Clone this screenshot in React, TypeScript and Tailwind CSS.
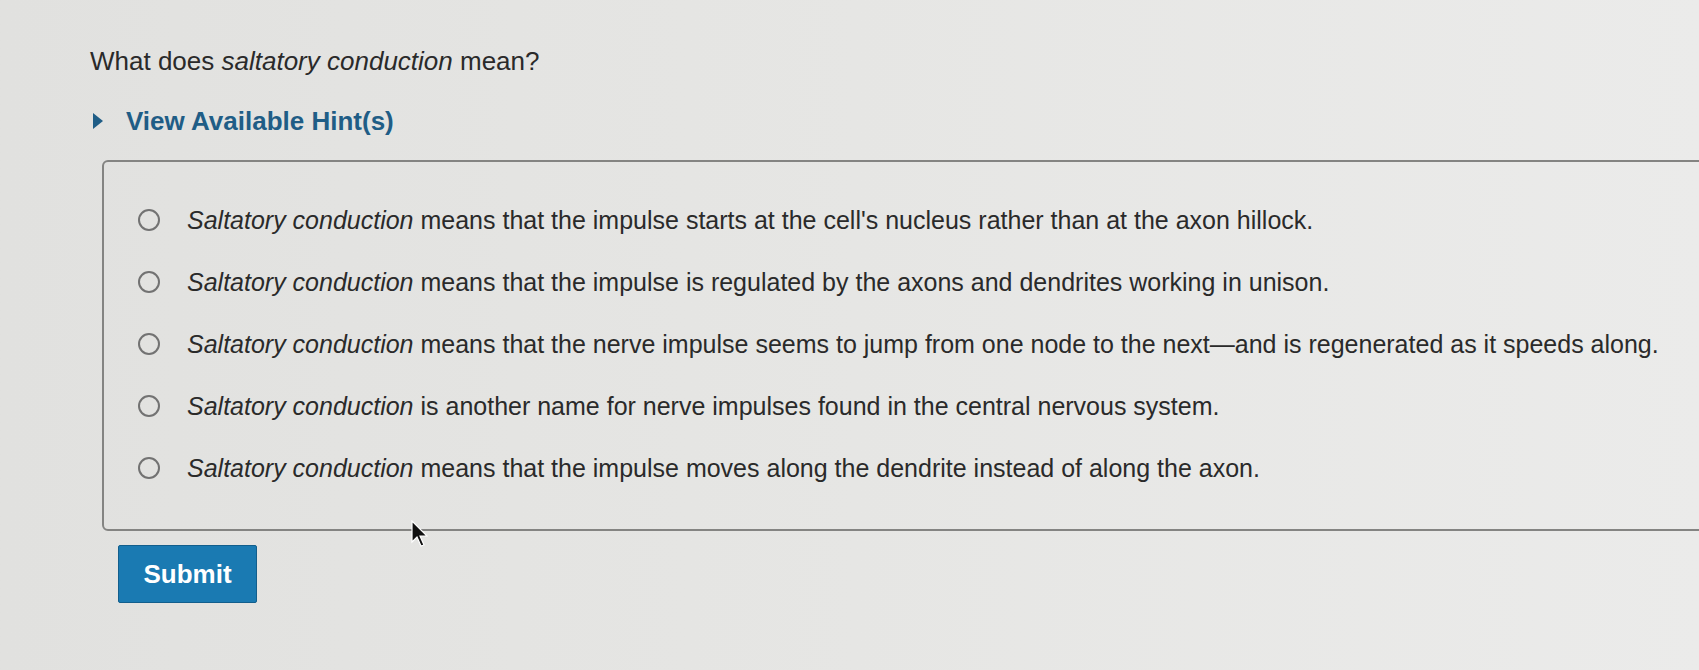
import React from "react"

const options: { rest: string }[] = [
  { rest: " means that the impulse starts at the cell's nucleus rather than at the axon hillock." },
  { rest: " means that the impulse is regulated by the axons and dendrites working in unison." },
  { rest: " means that the nerve impulse seems to jump from one node to the next\u2014and is regenerated as it speeds along." },
  { rest: " is another name for nerve impulses found in the central nervous system." },
  { rest: " means that the impulse moves along the dendrite instead of along the axon." },
]

function Radio() {
  return <span className="h-[22px] w-[22px] shrink-0 rounded-full border-[2px] border-[#727272]" />
}

export default function App() {
  return (
    <div
      className="relative h-[670px] w-full overflow-hidden bg-gradient-to-r from-[#e1e1df] via-[#e6e6e4] to-[#ebebea] pl-[90px] pt-[46px] text-[#2a2a2a]"
      style={{ fontFamily: '"Liberation Sans", Arial, sans-serif' }}
    >
      <h1 className="text-[26px] leading-[30px]">
        What does <i>saltatory conduction</i> mean?
      </h1>

      <button className="mt-[30px] ml-[2px] flex items-center gap-[22px] text-[26px] leading-[30px] font-bold text-[#1f5d86]">
        <svg width="12" height="18" viewBox="0 0 12 18">
          <path d="M1 1 L11 9 L1 17 Z" fill="#1f5d86" />
        </svg>
        View Available Hint(s)
      </button>

      <div className="mt-[24px] ml-[12px] w-[1640px] rounded-[6px] border-[2px] border-[#848482] pt-[27px] pb-[30px] pl-[34px]">
        {options.map((o, i) => (
          <label key={i} className="flex h-[62px] items-center gap-[27px] text-[25px] leading-[30px]">
            <Radio />
            <span>
              <i>Saltatory conduction</i>
              {o.rest}
            </span>
          </label>
        ))}
      </div>

      <button className="mt-[14px] ml-[28px] flex h-[58px] w-[139px] items-center justify-center rounded-[2px] border border-[#125e8c] bg-[#1a7ab2] text-[26px] font-bold text-white">
        Submit
      </button>

      <svg className="absolute left-[410px] top-[520px]" width="18" height="28" viewBox="0 0 18 28">
        <path d="M2 1 L2 22 L7 17 L11 26 L14 25 L10 16 L17 16 Z" fill="#111" stroke="#fff" strokeWidth="1.2" />
      </svg>
    </div>
  )
}
